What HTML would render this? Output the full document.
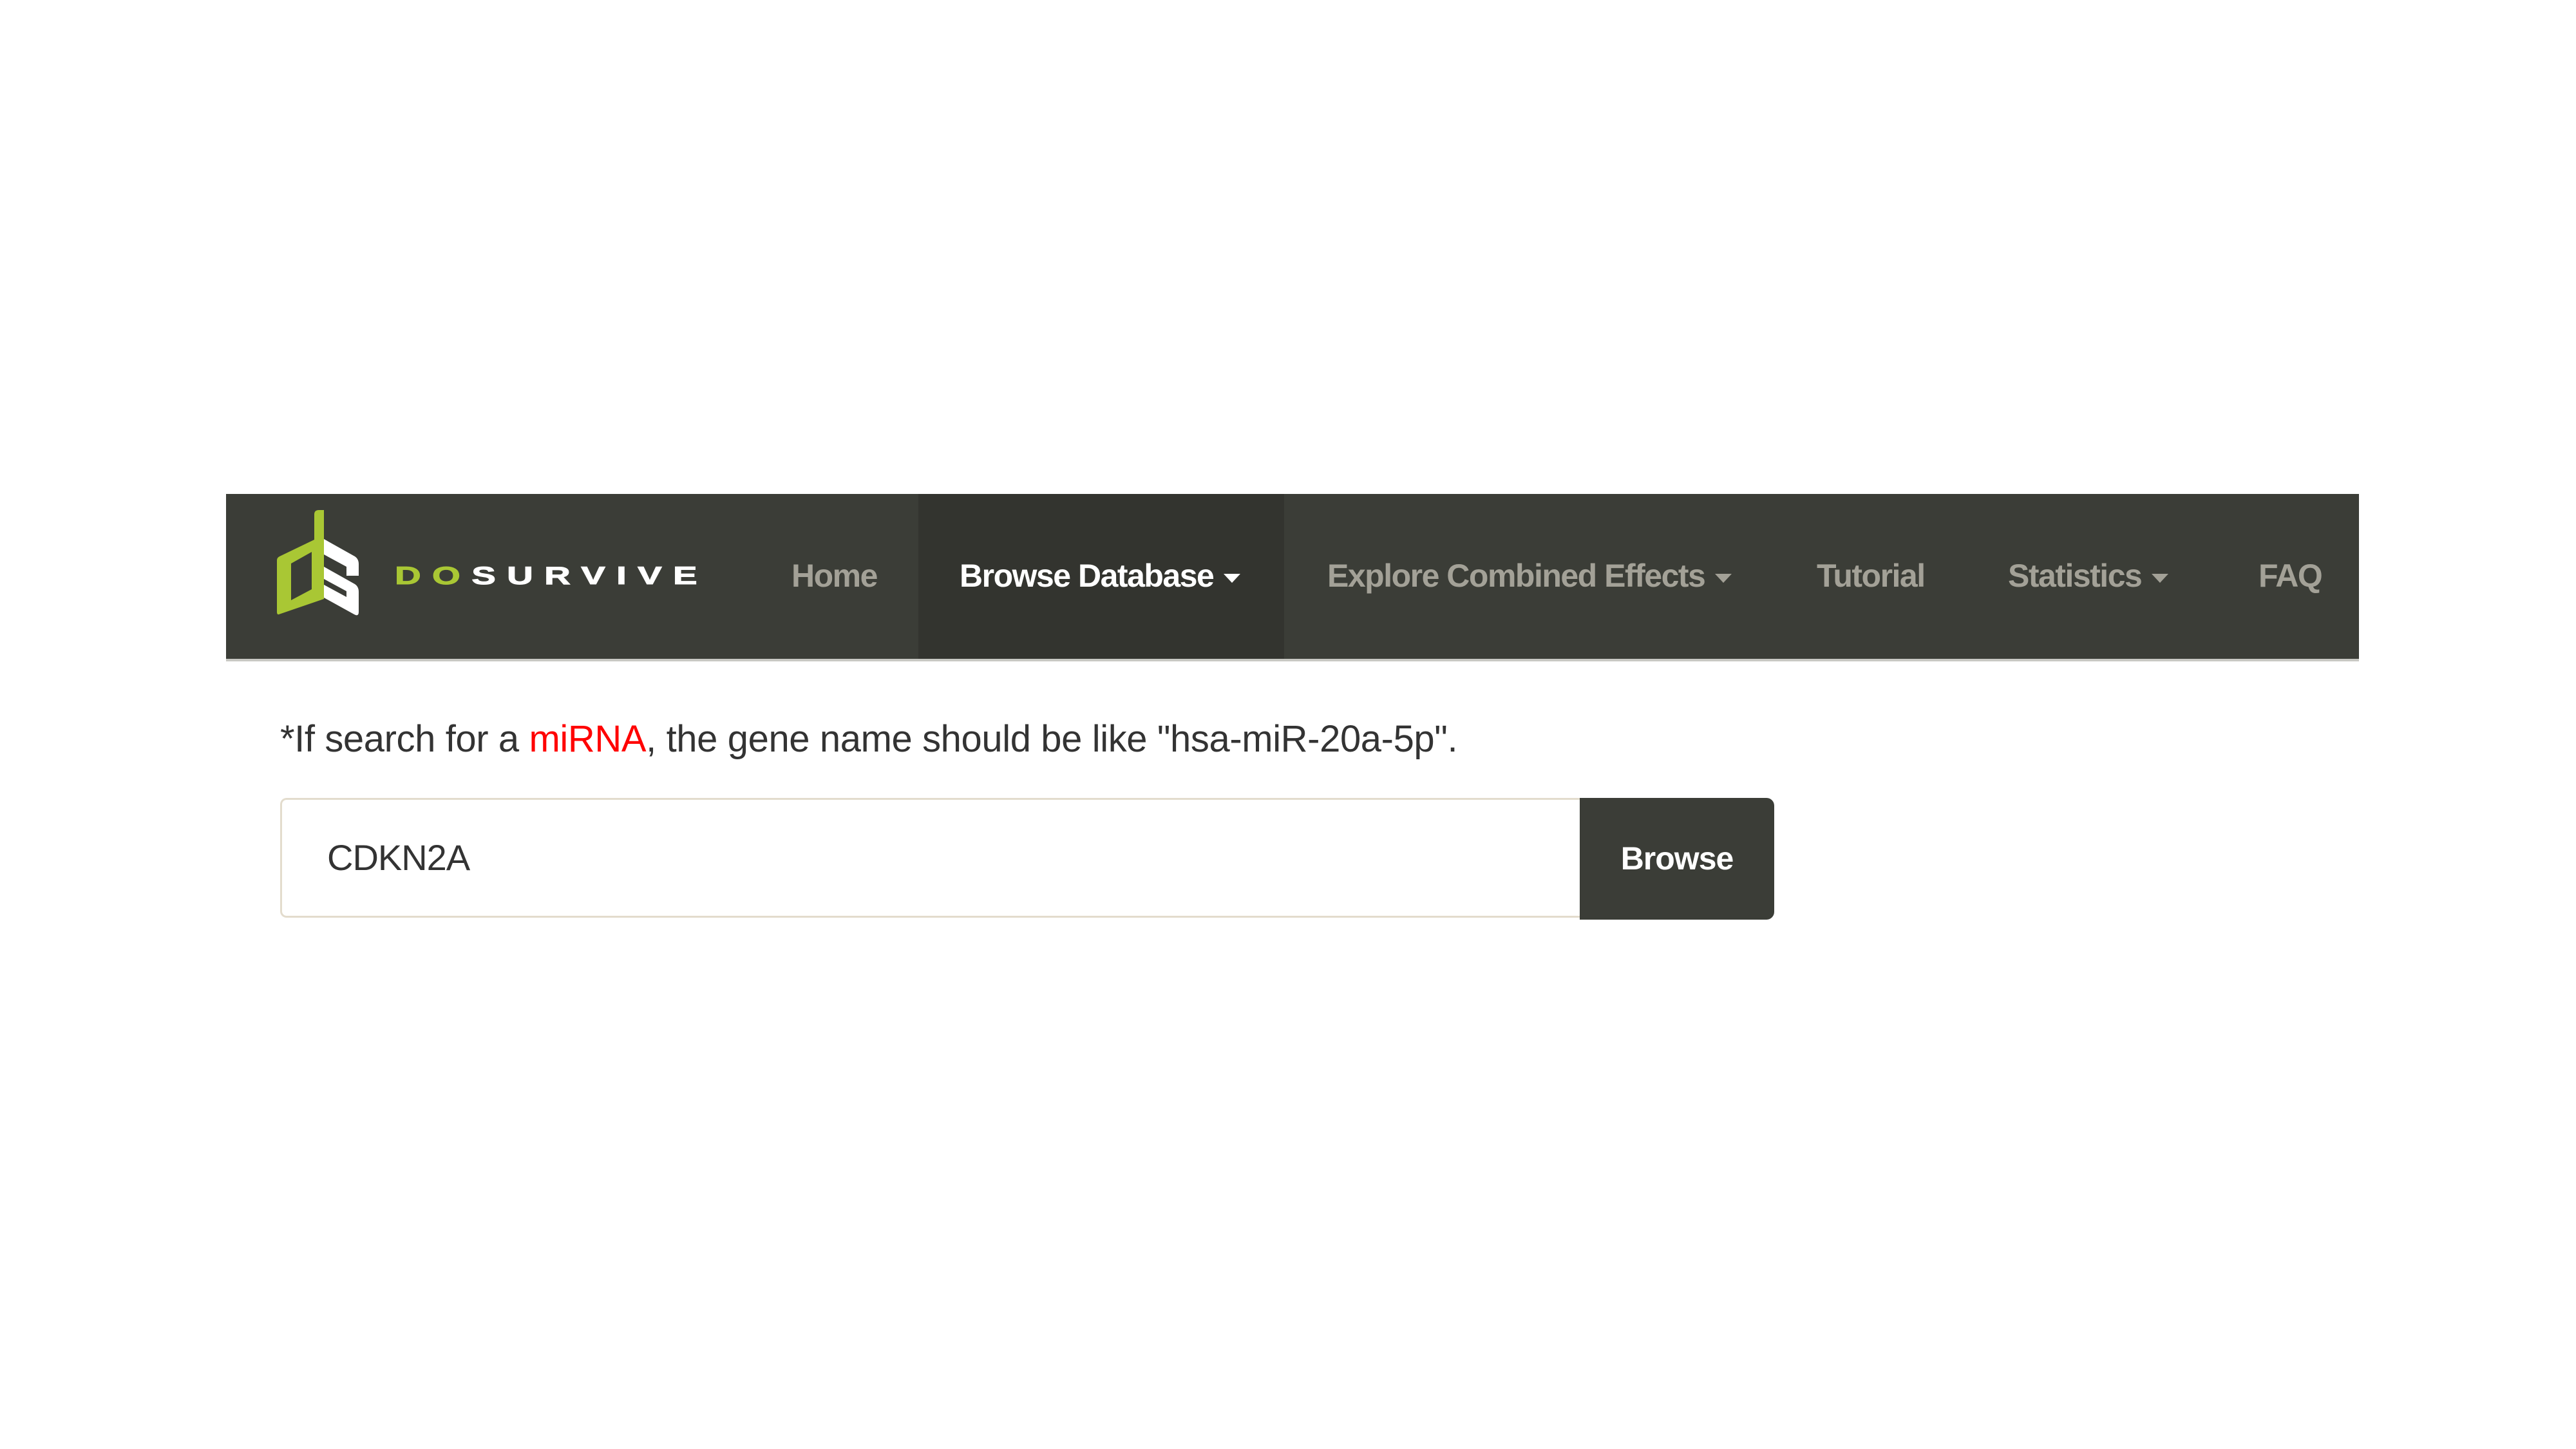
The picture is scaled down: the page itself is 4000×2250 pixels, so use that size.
<!DOCTYPE html>
<html><head><meta charset="utf-8"><style>
html,body{margin:0;padding:0;background:#fff;width:4000px;height:2250px;overflow:hidden;font-family:"Liberation Sans",Arial,sans-serif}
.nav{position:absolute;left:351px;top:767px;width:3312px;height:256px;background:#3b3d37;border-bottom:4px solid #c9c9c4}
.act{position:absolute;left:1075px;top:0;width:568px;height:256px;background:#33342f}
.it{position:absolute;top:0;height:256px;line-height:254px;font-size:50px;font-weight:bold;color:#a3a197;white-space:nowrap;letter-spacing:-1.5px}
.car{display:inline-block;width:0;height:0;border-left:13px solid transparent;border-right:13px solid transparent;border-top:14px solid currentColor;vertical-align:middle;margin-left:16px}
.msg{position:absolute;left:435px;top:1114px;font-size:58px;color:#333;white-space:nowrap;letter-spacing:-0.4px}
.inp{position:absolute;left:435px;top:1239px;width:2018px;height:186px;border:3px solid #e3dccd;border-right:none;border-radius:10px 0 0 10px;box-sizing:border-box;font-size:56px;color:#333;line-height:180px;padding-left:70px;letter-spacing:-1px}
.btn{position:absolute;left:2453px;top:1239px;width:302px;height:189px;background:#3b3d37;border-radius:0 12px 12px 0;color:#fff;font-weight:bold;font-size:50px;line-height:189px;text-align:center;letter-spacing:-1px}
</style></head><body>
<div class="nav">
<div class="act"></div>
<svg style="position:absolute;left:69px;top:13px" width="160" height="190" viewBox="0 0 160 190">
<path fill="#a9c734" fill-rule="evenodd" d="M68,19 Q68,12 75,12 H83 V150 L13,174 Q10,175 10,170 V90 Q10,86 14,84 L68,58 Z M32,95 V152 L64,135 V77 Z"/>
<path fill="#fff" d="M83,57 L131,84 Q137,88 137,96 V114 H118 V100 L83,81 Z M83,100 L131,127 Q137,131 137,139 V170 Q137,178 130,174 L83,148 V128 L118,147 V138 L83,119 Z"/>
</svg>
<svg style="position:absolute;left:262px;top:106px" width="500" height="44"><text x="0" y="34" font-family="Liberation Sans" font-weight="bold" font-size="39" letter-spacing="12" stroke-width="1" textLength="487" lengthAdjust="spacingAndGlyphs"><tspan fill="#a9c734" stroke="#a9c734">DO</tspan><tspan fill="#fff" stroke="#fff">SURVIVE</tspan></text></svg>
<div class="it" style="left:878px">Home</div>
<div class="it" style="left:1139px;color:#fff">Browse Database<span class="car"></span></div>
<div class="it" style="left:1710px">Explore Combined Effects<span class="car"></span></div>
<div class="it" style="left:2470px">Tutorial</div>
<div class="it" style="left:2767px">Statistics<span class="car"></span></div>
<div class="it" style="left:3156px">FAQ</div>
</div>
<div class="msg">*If search for a <span style="color:#f00">miRNA</span>, the gene name should be like "hsa-miR-20a-5p".</div>
<div class="inp">CDKN2A</div>
<div class="btn">Browse</div>
</body></html>
